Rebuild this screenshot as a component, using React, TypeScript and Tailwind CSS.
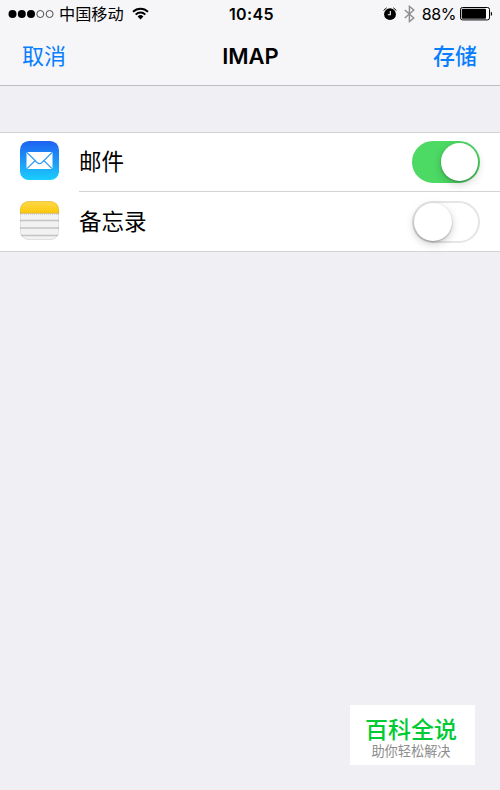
import { useState } from 'react';
import type { ReactNode } from 'react';
import clsx from 'clsx';

interface SwitchProps {
  label: string;
  checked: boolean;
  onChange: () => void;
}

interface AccountRowProps extends SwitchProps {
  icon: ReactNode;
}

function SignalDots() {
  return (
    <svg width="47" height="10" viewBox="0 0 47 10" className="shrink-0">
      <circle cx="4.5" cy="5" r="4" />
      <circle cx="13.8" cy="5" r="4" />
      <circle cx="23" cy="5" r="4" />
      <g fill="none" stroke="#222" strokeWidth="0.8">
        <circle cx="32.3" cy="5" r="3.5" />
        <circle cx="41.6" cy="5" r="3.5" />
      </g>
    </svg>
  );
}

function WifiIcon() {
  return (
    <svg width="17" height="13" viewBox="0 0 17 13" className="shrink-0">
      <g fill="none" stroke="#000" strokeWidth="2">
        <path d="M1 4.7a10.7 10.7 0 0 1 15 0" />
        <path d="M3.7 7.6a6.8 6.8 0 0 1 9.6 0" />
      </g>
      <path d="M5.6 9.5a4.2 4.2 0 0 1 5.8 0L8.5 12.5z" />
    </svg>
  );
}

function AlarmIcon() {
  return (
    <svg width="14" height="14" viewBox="0 0 14 14" className="shrink-0">
      <circle cx="7" cy="7.2" r="5.9" />
      <path
        d="M.9 3.2 3.3 1.1M13.1 3.2 10.7 1.1"
        fill="none"
        stroke="#000"
        strokeWidth="1"
        strokeLinecap="round"
      />
      <path d="M7.3 4v3.8H4.8" fill="none" stroke="#fff" strokeWidth="1.1" />
    </svg>
  );
}

function BluetoothIcon() {
  return (
    <svg width="11" height="18" viewBox="0 0 11 18" className="shrink-0">
      <path
        d="M.8 5 9.8 13 5.4 16.6V1.4L9.8 5 .8 13"
        fill="none"
        stroke="#8e8e90"
        strokeWidth="1.4"
      />
    </svg>
  );
}

function BatteryIcon() {
  return (
    <svg width="33" height="14" viewBox="0 0 33 14" className="shrink-0">
      <rect x=".5" y=".5" width="29" height="12.4" rx="2" fill="#fff" stroke="#000" />
      <rect x="1.7" y="1.7" width="24.3" height="10" rx="1" />
      <path d="M30.8 4.4c1.8.8 1.8 3.8 0 4.6z" />
    </svg>
  );
}

function MailIcon() {
  return (
    <svg width="39" height="39" viewBox="0 0 39 39">
      <defs>
        <linearGradient id="mail-bg" x1="0" y1="0" x2="0" y2="1">
          <stop offset="0" stopColor="#1e62f0" />
          <stop offset="1" stopColor="#1bcdfd" />
        </linearGradient>
      </defs>
      <rect width="39" height="39" rx="8.8" fill="url(#mail-bg)" />
      <rect x="6.5" y="11" width="26" height="17" rx="1.2" fill="#fff" />
      <g fill="none" stroke="#2f9cf6" strokeWidth="1.2">
        <path d="M7 11.5 17 21.5q2.5 2.2 5 0L32 11.5" />
        <path d="M7 27.6 15 19.7M32 27.6 24 19.7" />
      </g>
    </svg>
  );
}

function NotesIcon() {
  return (
    <svg width="39" height="39" viewBox="0 0 39 39">
      <defs>
        <clipPath id="notes-clip">
          <rect width="39" height="39" rx="8.8" />
        </clipPath>
        <linearGradient id="notes-top" x1="0" y1="0" x2="0" y2="1">
          <stop offset="0" stopColor="#ffd94e" />
          <stop offset="1" stopColor="#fdc808" />
        </linearGradient>
      </defs>
      <g clipPath="url(#notes-clip)">
        <rect width="39" height="39" fill="#f2f2f2" />
        <rect width="39" height="12" fill="url(#notes-top)" />
        <path d="M0 12.3h39" stroke="#c9a94d" strokeWidth=".8" />
        <path d="M0 13.5h39" stroke="#d2d2d2" strokeDasharray="1 1" />
        <path d="M0 19.5h39M0 27h39M0 34.5h39" stroke="#c4c4c6" strokeWidth="1.3" />
      </g>
      <rect x=".4" y=".4" width="38.2" height="38.2" rx="8.5" fill="none" stroke="#000" strokeOpacity=".1" strokeWidth=".8" />
    </svg>
  );
}

function Switch({ label, checked, onChange }: SwitchProps) {
  return (
    <button
      type="button"
      role="switch"
      aria-checked={checked}
      aria-label={label}
      onClick={onChange}
      className={clsx(
        'flex h-[41.5px] w-[68px] items-center rounded-full border-2',
        checked
          ? 'justify-end border-[#4cd964] bg-[#4cd964]'
          : 'justify-start border-[#e5e5e5] bg-white'
      )}
    >
      <span className="size-[37.5px] rounded-full bg-white shadow-[0_3px_8px_rgba(0,0,0,0.2),0_1px_2px_rgba(0,0,0,0.25)]" />
    </button>
  );
}

function AccountRow({ icon, label, checked, onChange }: AccountRowProps) {
  return (
    <div className="flex h-[50px] items-start pl-5">
      {icon}
      <span className="ml-5 flex-1 pt-[10px] text-[22.5px] leading-none">{label}</span>
      <div className="mr-5">
        <Switch label={label} checked={checked} onChange={onChange} />
      </div>
    </div>
  );
}

export default function App() {
  const [mail, setMail] = useState(true);
  const [notes, setNotes] = useState(false);

  return (
    <div className="flex h-[790px] w-[500px] flex-col bg-[#efeff4] font-[Inter,'Noto_Sans_CJK_SC',sans-serif] text-black">
      <header className="h-[86px] border-b border-[#bdbdc1] bg-[#f6f6f8]">
        {/* Status bar */}
        <div className="grid h-7 grid-cols-[1fr_auto_1fr] items-center pr-[7px] pl-2">
          <div className="flex items-center">
            <SignalDots />
            <span className="mr-2 ml-1 text-[16.2px] leading-none">中国移动</span>
            <WifiIcon />
          </div>
          <span className="pl-[2px] text-[16px] font-semibold tracking-[0.4px]">10:45</span>
          <div className="flex items-center justify-end">
            <AlarmIcon />
            <span className="mx-[7px] flex">
              <BluetoothIcon />
            </span>
            <span className="mr-1 text-[16px] tracking-[-0.4px]">88%</span>
            <BatteryIcon />
          </div>
        </div>

        {/* Navigation bar */}
        <div className="grid h-[55px] grid-cols-[1fr_auto_1fr] items-center pr-[23px] pl-6 leading-none">
          <button type="button" className="-ml-0.5 text-left text-[22px] text-[#087eff]">
            取消
          </button>
          <h1 className="text-center text-[22px] font-semibold">IMAP</h1>
          <button type="button" className="text-right text-[22px] font-medium text-[#087eff]">
            存储
          </button>
        </div>
      </header>

      <main className="mt-[46px] border-y border-[#d3d3d7] bg-white">
        <div className="pt-2">
          <AccountRow
            icon={<MailIcon />}
            label="邮件"
            checked={mail}
            onChange={() => setMail(!mail)}
          />
        </div>
        <div className="ml-[79px] h-px bg-[#d3d3d7]" />
        <div className="pt-[9px]">
          <AccountRow
            icon={<NotesIcon />}
            label="备忘录"
            checked={notes}
            onChange={() => setNotes(!notes)}
          />
        </div>
      </main>

      <footer className="mt-auto mr-[25px] mb-[25px] flex h-[60px] w-[125px] flex-col items-center self-end bg-white pt-[14px] pr-[3px] leading-none">
        <span className="text-[23px] font-medium text-[#00cb34]">百科全说</span>
        <span className="mt-[3px] text-[13.2px] text-[#8c8c8c]">助你轻松解决</span>
      </footer>
    </div>
  );
}
